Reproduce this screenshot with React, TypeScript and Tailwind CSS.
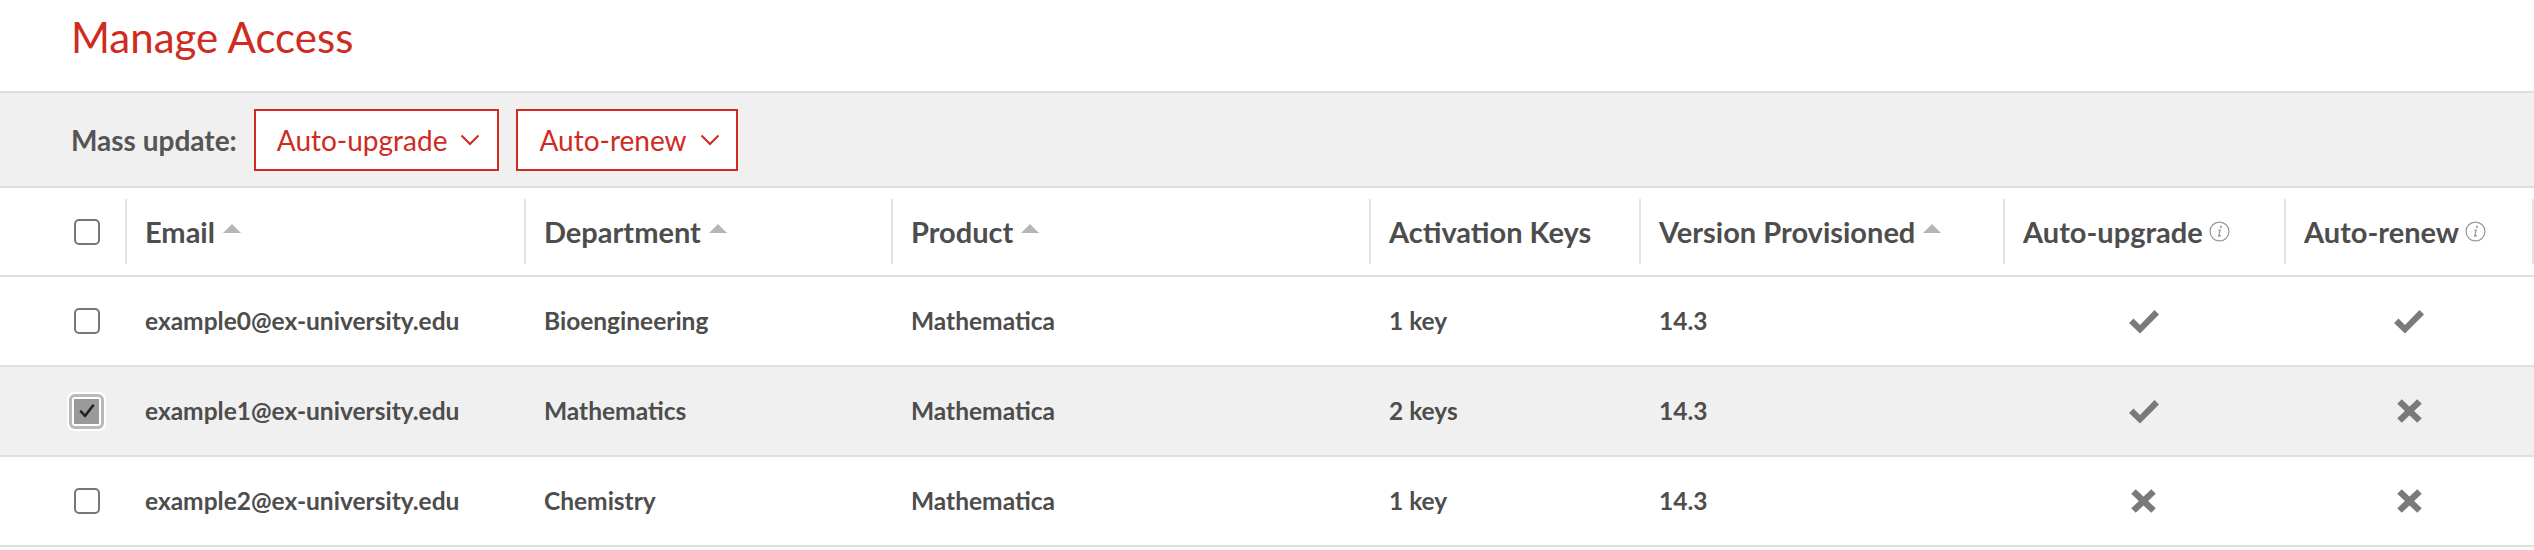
import React from "react";

type Row = {
  email: string;
  department: string;
  product: string;
  keys: string;
  version: string;
  upgrade: boolean;
  renew: boolean;
  selected?: boolean;
};

const rows: Row[] = [
  {
    email: "example0@ex-university.edu",
    department: "Bioengineering",
    product: "Mathematica",
    keys: "1 key",
    version: "14.3",
    upgrade: true,
    renew: true,
  },
  {
    email: "example1@ex-university.edu",
    department: "Mathematics",
    product: "Mathematica",
    keys: "2 keys",
    version: "14.3",
    upgrade: true,
    renew: false,
    selected: true,
  },
  {
    email: "example2@ex-university.edu",
    department: "Chemistry",
    product: "Mathematica",
    keys: "1 key",
    version: "14.3",
    upgrade: false,
    renew: false,
  },
];

const grid =
  "grid grid-cols-[125px_399px_367px_478px_270px_364px_281px_1fr]";

function Chevron() {
  return (
    <svg width="20" height="12" viewBox="0 0 20 12" fill="none">
      <polyline
        points="1.5,1.5 10,10 18.5,1.5"
        stroke="#cf2b1f"
        strokeWidth="2"
      />
    </svg>
  );
}

function SortArrow() {
  return (
    <span className="ml-[8px] mb-[6px] inline-block h-0 w-0 border-x-[9px] border-b-[9px] border-x-transparent border-b-[#b5b5b5]" />
  );
}

function InfoIcon() {
  return (
    <svg width="21" height="21" viewBox="0 0 20 20" fill="none" className="ml-[6px]">
      <circle cx="10" cy="10" r="9" stroke="#9a9a9a" strokeWidth="1.2" />
      <circle cx="11.3" cy="5.6" r="1.1" fill="#9a9a9a" />
      <path
        d="M10.6 8.6 L9.2 14.2 Q9 15 9.8 14.6 L10.8 13.9"
        stroke="#9a9a9a"
        strokeWidth="1.2"
        strokeLinecap="round"
      />
      <path d="M9.2 8.7 L10.6 8.6" stroke="#9a9a9a" strokeWidth="1.1" strokeLinecap="round" />
    </svg>
  );
}

function CheckMark() {
  return (
    <svg width="30" height="25" viewBox="0 0 30 25">
      <polygon points="0,14 4.5,9.5 11,16 25.5,1 30,5.5 11,24.5" fill="#7a7a7a" />
    </svg>
  );
}

function Cross() {
  return (
    <svg width="25" height="24" viewBox="0 0 25 24">
      <line x1="2.5" y1="2.5" x2="22.5" y2="21.5" stroke="#7a7a7a" strokeWidth="6.5" />
      <line x1="22.5" y1="2.5" x2="2.5" y2="21.5" stroke="#7a7a7a" strokeWidth="6.5" />
    </svg>
  );
}

function Checkbox({ checked }: { checked?: boolean }) {
  if (!checked) {
    return <div className="h-[26px] w-[26px] rounded-[5px] border-2 border-[#777] bg-white" />;
  }
  return (
    <div className="-ml-[7px] rounded-[7px] bg-white p-[2px]">
      <div className="rounded-[6px] bg-[#b9b9b9] p-[3px]">
        <div className="rounded-[3px] bg-white p-[2px]">
          <div className="flex h-[25px] w-[25px] items-center justify-center bg-[#9a9a9a]">
            <svg width="16" height="14" viewBox="0 0 16 14" fill="none">
              <polyline
                points="2,7.5 6,12 14,1.5"
                stroke="#222"
                strokeWidth="2.6"
                strokeLinecap="round"
                strokeLinejoin="round"
              />
            </svg>
          </div>
        </div>
      </div>
    </div>
  );
}

function HeadCell({
  label,
  sort,
  info,
  last,
}: {
  label: string;
  sort?: boolean;
  info?: boolean;
  last?: boolean;
}) {
  return (
    <div className="flex h-full items-center">
      <div
        className={
          "flex h-[65px] w-full items-center border-l-2 border-[#e2e2e2] pl-[18px] " +
          (last ? "border-r-2" : "")
        }
      >
        <span>{label}</span>
        {sort && <SortArrow />}
        {info && <InfoIcon />}
      </div>
    </div>
  );
}

export default function App() {
  return (
    <div className="w-[2534px] bg-white font-[Lato,sans-serif]">
      <div className="h-[93px] border-b-2 border-[#dedede] pl-[71px] pt-[16px]">
        <h1 className="text-[42px] font-normal leading-none text-[#cf2b1f]">Manage Access</h1>
      </div>

      <div className="flex h-[95px] items-center gap-[17px] border-b-2 border-[#dedede] bg-[#f0f0f0] pl-[71px]">
        <span className="text-[28px] font-bold text-[#555]">Mass update:</span>
        <button className="flex h-[62px] items-center gap-[13px] border-2 border-[#cf2b1f] bg-white pl-[21px] pr-[17px] text-[28px] text-[#cf2b1f]">
          Auto-upgrade
          <Chevron />
        </button>
        <button className="flex h-[62px] items-center gap-[13px] border-2 border-[#cf2b1f] bg-white pl-[21px] pr-[16px] text-[28px] text-[#cf2b1f]">
          Auto-renew
          <Chevron />
        </button>
      </div>

      <div className={grid + " h-[89px] border-b-2 border-[#e0e0e0] text-[29px] font-bold text-[#4d4d4d]"}>
        <div className="flex items-center pl-[74px]">
          <Checkbox />
        </div>
        <HeadCell label="Email" sort />
        <HeadCell label="Department" sort />
        <HeadCell label="Product" sort />
        <HeadCell label="Activation Keys" />
        <HeadCell label="Version Provisioned" sort />
        <HeadCell label="Auto-upgrade" info />
        <HeadCell label="Auto-renew" info last />
      </div>

      {rows.map((r) => (
        <div
          key={r.email}
          className={
            grid +
            " h-[90px] items-center border-b-2 border-[#e0e0e0] text-[24.5px] font-bold text-[#4d4d4d] " +
            (r.selected ? "bg-[#f0f0f0]" : "bg-white")
          }
        >
          <div className="flex items-center pl-[74px]">
            <Checkbox checked={r.selected} />
          </div>
          <div className="pl-[20px]">{r.email}</div>
          <div className="pl-[20px]">{r.department}</div>
          <div className="pl-[20px]">{r.product}</div>
          <div className="pl-[20px]">{r.keys}</div>
          <div className="pl-[20px]">{r.version}</div>
          <div className="flex justify-center">{r.upgrade ? <CheckMark /> : <Cross />}</div>
          <div className="flex justify-center">{r.renew ? <CheckMark /> : <Cross />}</div>
        </div>
      ))}
    </div>
  );
}
